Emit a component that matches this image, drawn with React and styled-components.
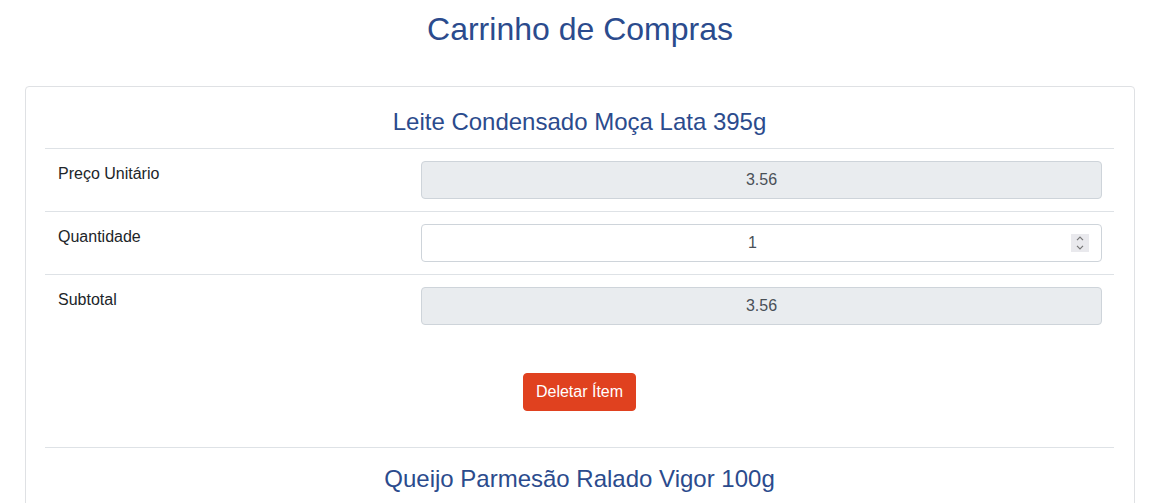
import { useState } from 'react';
import styled, { createGlobalStyle } from 'styled-components';

const GlobalStyle = createGlobalStyle`
  html {
    scrollbar-width: none;
  }
  body {
    margin: 0;
    font-family: "Liberation Sans", Arial, sans-serif;
    font-size: 16px;
    color: #212529;
    background: #fff;
  }
`;

const Page = styled.main`
  padding: 0 28px 40px 25px;
`;

const Title = styled.h1`
  margin: 10px 0 38px;
  font-size: 32px;
  font-weight: 400;
  line-height: 1.2;
  text-align: center;
  color: #2b4b8d;
`;

const Card = styled.section`
  border: 1px solid #dfe1e4;
  border-radius: 4px;
  padding: 20px 20px 0 19px;
`;

const Item = styled.article`
  & + & {
    border-top: 1px solid #dee2e6;
    margin-top: 36px;
    padding-top: 16px;
  }
`;

const ItemName = styled.h3`
  margin: 0;
  padding: 1px 0 11px;
  font-size: 24px;
  font-weight: 400;
  line-height: 1.2;
  text-align: center;
  color: #2b4b8d;
`;

const Row = styled.div`
  display: grid;
  grid-template-columns: 364px 1fr;
  border-top: 1px solid #dee2e6;
`;

const Label = styled.div`
  padding: 13px 13px 11px;
  line-height: 24px;
`;

const Cell = styled.div`
  position: relative;
  padding: 12px 12px;
`;

const Field = styled.input`
  box-sizing: border-box;
  display: block;
  width: 100%;
  height: 38px;
  padding: ${(p) => (p.$spin ? '6px 30px 6px 12px' : '6px 12px')};
  font-family: inherit;
  font-size: 16px;
  line-height: 1.5;
  color: #495057;
  text-align: center;
  background: ${(p) => (p.readOnly ? '#e9ecef' : '#fff')};
  border: 1px solid #ced4da;
  border-radius: 4px;
  outline: none;
  appearance: textfield;

  &::-webkit-inner-spin-button,
  &::-webkit-outer-spin-button {
    -webkit-appearance: none;
    margin: 0;
  }
`;

const Spinner = styled.span`
  position: absolute;
  top: 22px;
  right: 25px;
  width: 18px;
  height: 18px;
  display: flex;
  flex-direction: column;
  align-items: center;
  justify-content: center;
  gap: 4px;
  background: #e9e9ed;
  pointer-events: none;

  svg {
    display: block;
  }
`;

const Actions = styled.div`
  display: flex;
  justify-content: center;
  padding-top: 36px;
`;

const DeleteButton = styled.button`
  height: 38px;
  padding: 6px 12px;
  font-family: inherit;
  font-size: 16px;
  line-height: 1.5;
  color: #fff;
  background: #e0411f;
  border: 1px solid #e0411f;
  border-radius: 4px;
  cursor: pointer;
`;

const initial = [
  { id: 1, name: 'Leite Condensado Moça Lata 395g', price: 3.56, qty: 1 },
  { id: 2, name: 'Queijo Parmesão Ralado Vigor 100g', price: 8.99, qty: 1 },
];

function SpinIcon() {
  return (
    <Spinner>
      <svg width="8" height="5" viewBox="0 0 8 5">
        <path d="M1 4.2 L4 1.2 L7 4.2" fill="none" stroke="#767676" strokeWidth="1.2" />
      </svg>
      <svg width="8" height="5" viewBox="0 0 8 5">
        <path d="M1 0.8 L4 3.8 L7 0.8" fill="none" stroke="#767676" strokeWidth="1.2" />
      </svg>
    </Spinner>
  );
}

export default function App() {
  const [items, setItems] = useState(initial);

  const setQty = (id, qty) =>
    setItems(items.map((i) => (i.id === id ? { ...i, qty } : i)));

  return (
    <Page>
      <GlobalStyle />
      <Title>Carrinho de Compras</Title>
      <Card>
        {items.map((item) => (
          <Item key={item.id}>
            <ItemName>{item.name}</ItemName>
            <Row>
              <Label>Preço Unitário</Label>
              <Cell>
                <Field readOnly value={item.price.toFixed(2)} />
              </Cell>
            </Row>
            <Row>
              <Label>Quantidade</Label>
              <Cell>
                <Field
                  type="number"
                  min="1"
                  $spin
                  value={item.qty}
                  onChange={(e) => setQty(item.id, Number(e.target.value))}
                />
                <SpinIcon />
              </Cell>
            </Row>
            <Row>
              <Label>Subtotal</Label>
              <Cell>
                <Field readOnly value={(item.price * item.qty).toFixed(2)} />
              </Cell>
            </Row>
            <Actions>
              <DeleteButton
                onClick={() => setItems(items.filter((i) => i.id !== item.id))}
              >
                Deletar Ítem
              </DeleteButton>
            </Actions>
          </Item>
        ))}
      </Card>
    </Page>
  );
}
